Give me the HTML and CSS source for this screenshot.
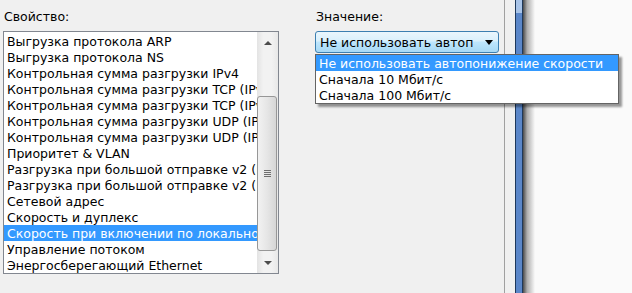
FILE: index.html
```html
<!DOCTYPE html>
<html lang="ru">
<head>
    <meta charset="UTF-8">
    <title>Дополнительно</title>
    <link rel="stylesheet" href="styles.css">
</head>
<body>
    <div class="screen">
        <div class="dialog">
            <div class="col col-prop">
                <div class="label">Свойство:</div>
                <div class="listbox">
                    <ul class="items">
                        <li>Выгрузка протокола ARP</li>
                        <li>Выгрузка протокола NS</li>
                        <li>Контрольная сумма разгрузки IPv4</li>
                        <li>Контрольная сумма разгрузки TCP (IPv4)</li>
                        <li>Контрольная сумма разгрузки TCP (IPv6)</li>
                        <li>Контрольная сумма разгрузки UDP (IPv4)</li>
                        <li>Контрольная сумма разгрузки UDP (IPv6)</li>
                        <li>Приоритет &amp; VLAN</li>
                        <li>Разгрузка при большой отправке v2 (IPv4)</li>
                        <li>Разгрузка при большой отправке v2 (IPv6)</li>
                        <li>Сетевой адрес</li>
                        <li>Скорость и дуплекс</li>
                        <li class="selected">Скорость при включении по локальной сети</li>
                        <li>Управление потоком</li>
                        <li>Энергосберегающий Ethernet</li>
                    </ul>
                    <div class="scrollbar">
                        <div class="sb-btn"><span class="tri-up"></span></div>
                        <div class="sb-track">
                            <div class="sb-thumb"><span class="grip"></span></div>
                        </div>
                        <div class="sb-btn"><span class="tri-down"></span></div>
                    </div>
                </div>
            </div>
            <div class="col col-value">
                <div class="label">Значение:</div>
                <div class="combo">
                    <span class="combo-text">Не использовать автоп</span>
                    <span class="combo-arrow"></span>
                </div>
            </div>
        </div>
        <div class="gap"></div>
        <div class="edge"></div>
        <div class="shade"></div>
        <div class="desk"></div>

        <ul class="popup">
            <li class="selected">Не использовать автопонижение скорости</li>
            <li>Сначала 10 Мбит/с</li>
            <li>Сначала 100 Мбит/с</li>
        </ul>
    </div>
</body>
</html>
```

FILE: styles.css
```css
body {
    margin: 0;
    font-family: "DejaVu Sans", sans-serif;
    font-size: 12.5px;
    color: #000;
    background: #fafafa;
}
ul {
    margin: 0;
    padding: 0;
    list-style: none;
}
.screen {
    position: relative;
    display: flex;
    width: 632px;
    height: 293px;
    overflow: hidden;
}

/* окно свойств */
.dialog {
    display: flex;
    width: 501px;
    padding: 9px 0 0 3px;
    background: #f0f0f0;
    border-right: 1px solid #a0a0a0;
}
.label {
    height: 16px;
    line-height: 16px;
    padding-left: 1px;
    margin-bottom: 6px;
}
.col-prop {
    width: 276px;
}
.col-value {
    margin-left: 36px;
}
.listbox {
    display: flex;
    height: 241px;
    background: #fff;
    border: 1px solid #828790;
}
.items {
    width: 253px;
    padding-top: 1px;
    overflow: hidden;
}
.items li {
    height: 16px;
    line-height: 17px;
    padding-left: 3px;
    white-space: nowrap;
    overflow: hidden;
}
.selected {
    background: #3399ff;
    color: #fff;
}

/* полоса прокрутки */
.scrollbar {
    display: flex;
    flex-direction: column;
    width: 21px;
    background: linear-gradient(to right, #e3e3e3, #f2f2f2 30%, #f2f2f2 70%, #e8e8e8);
}
.sb-btn {
    display: flex;
    align-items: center;
    justify-content: center;
    height: 21px;
}
.tri-up,
.tri-down {
    width: 0;
    height: 0;
    border-left: 4px solid transparent;
    border-right: 4px solid transparent;
}
.tri-up {
    border-bottom: 4px solid #4d4d4d;
}
.tri-down {
    border-top: 4px solid #4d4d4d;
}
.sb-track {
    flex: 1;
    display: flex;
    flex-direction: column;
    justify-content: flex-end;
    padding: 0 1px 1px 0;
}
.sb-thumb {
    display: flex;
    align-items: center;
    justify-content: center;
    height: 153px;
    border: 1px solid #979797;
    border-radius: 3px;
    background: linear-gradient(to right, #f2f2f2, #e6e6e6 50%, #d6d6d6);
}
.grip {
    width: 7px;
    height: 7px;
    background: repeating-linear-gradient(to bottom, #6f6f6f 0 1px, transparent 1px 2px);
}

/* поле со списком */
.combo {
    display: flex;
    align-items: center;
    width: 182px;
    height: 20px;
    border: 1px solid #3c7fb1;
    border-radius: 3px;
    background: linear-gradient(to bottom, #eaf6fd, #d9f0fc 45%, #bee6fd 50%, #a7d9f5);
}
.combo-text {
    width: 155px;
    padding-left: 4px;
    white-space: nowrap;
}
.combo-arrow {
    margin-left: 10px;
    border-left: 4px solid transparent;
    border-right: 4px solid transparent;
    border-top: 5px solid #000;
}

.popup {
    position: absolute;
    left: 315px;
    top: 54px;
    width: 302px;
    border: 1px solid #646464;
    background: #fff;
    box-shadow: 3px 3px 2px rgba(0, 0, 0, 0.4);
}
.popup li {
    height: 16px;
    line-height: 17px;
    padding-left: 3px;
    white-space: nowrap;
}

/* край соседнего окна */
.gap {
    width: 10px;
    background: #f0f0f0;
}
.edge {
    width: 6px;
    border-left: 1px solid #1e395b;
    border-right: 1px solid #1e395b;
    background: linear-gradient(to bottom, #a9c4e8 0 13px, #5b87c9 13px);
}
.shade {
    width: 12px;
    background: linear-gradient(to right, rgba(0, 0, 0, 0.7), rgba(0, 0, 0, 0.3) 35%, rgba(0, 0, 0, 0));
}
.desk {
    flex: 1;
}
```
